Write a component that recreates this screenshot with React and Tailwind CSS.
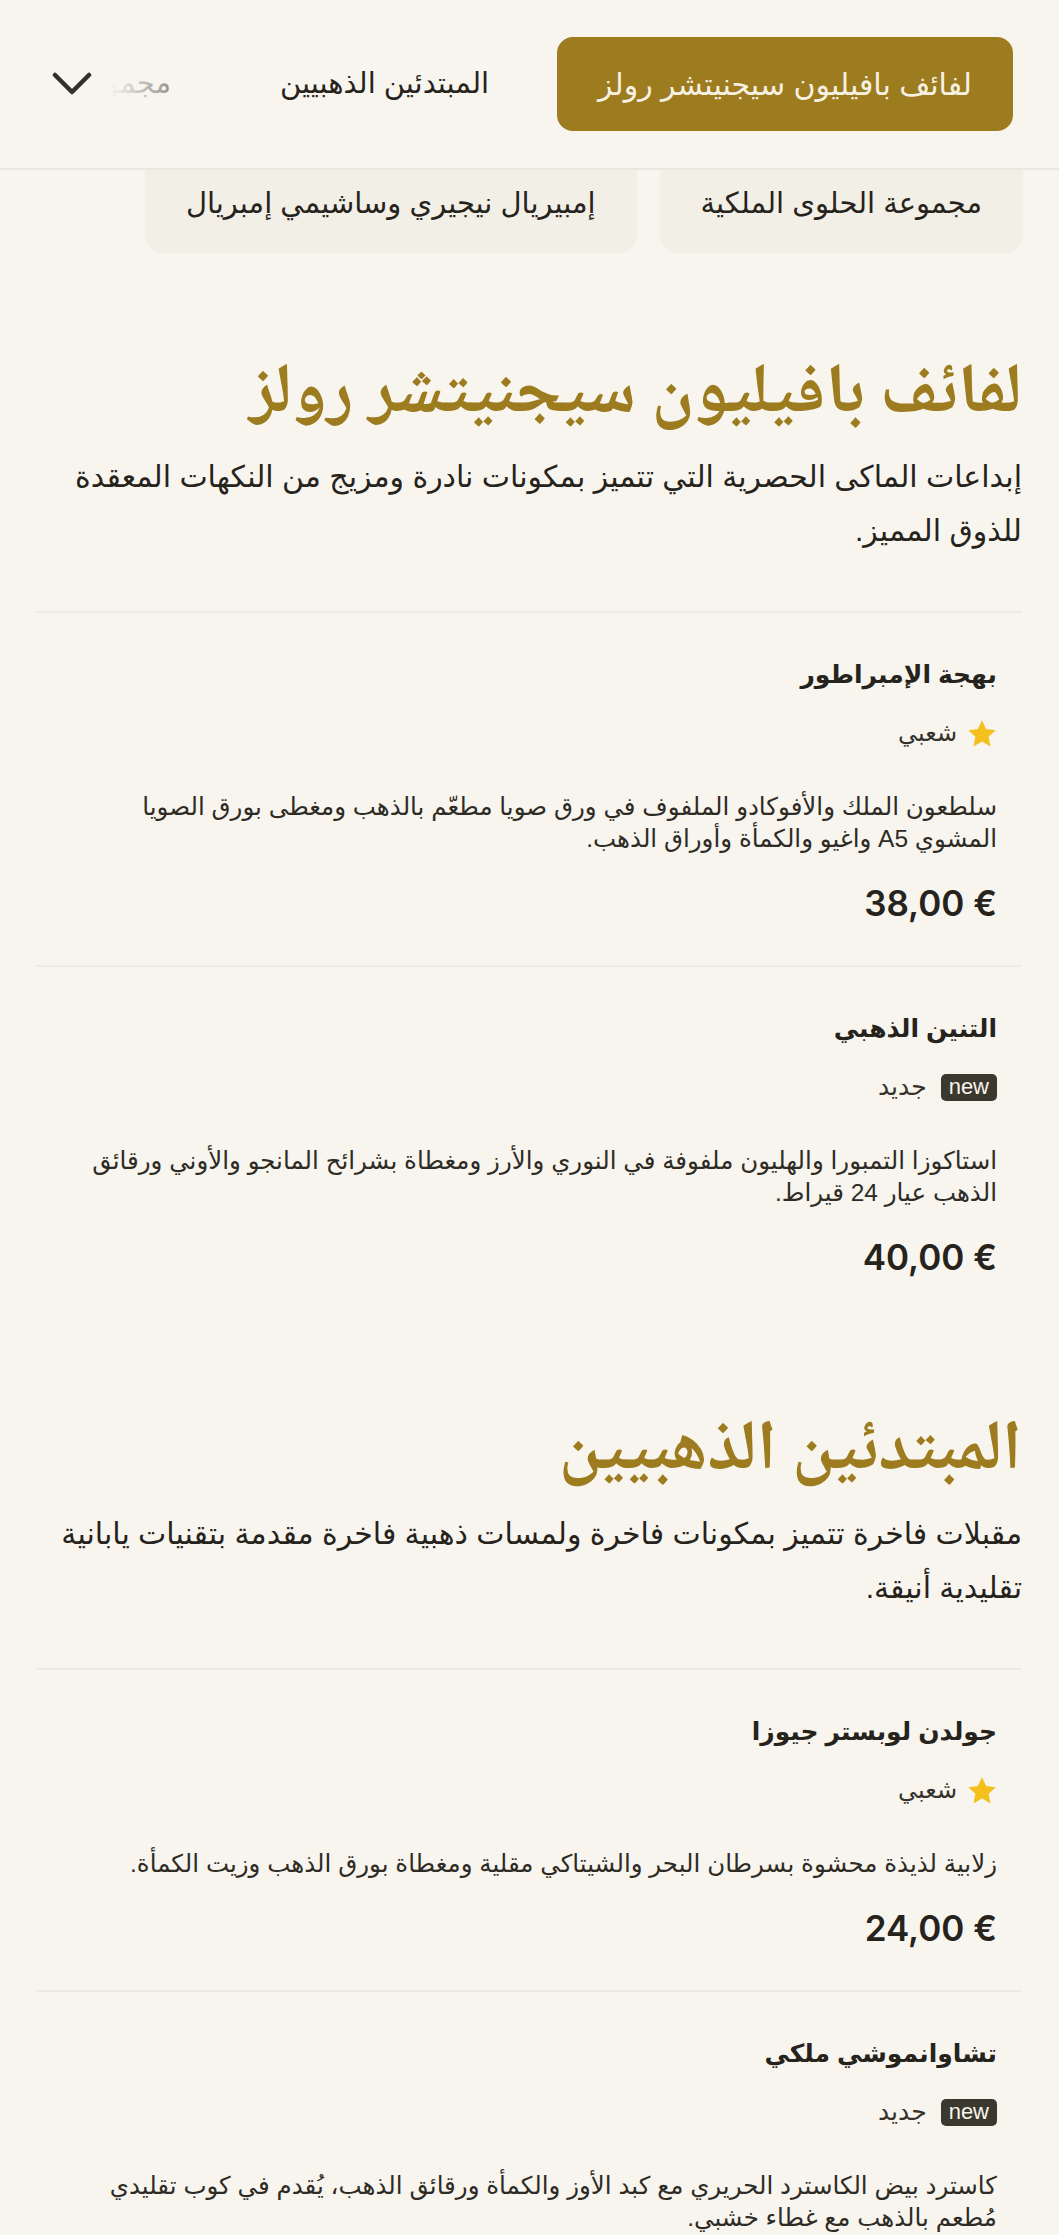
const sections = [
  {
    title: "لفائف بافيليون سيجنيتشر رولز",
    desc: "إبداعات الماكى الحصرية التي تتميز بمكونات نادرة ومزيج من النكهات المعقدة للذوق المميز.",
    items: [
      {
        name: "بهجة الإمبراطور",
        tag: "popular",
        desc: "سلطعون الملك والأفوكادو الملفوف في ورق صويا مطعّم بالذهب ومغطى بورق الصويا المشوي A5 واغيو والكمأة وأوراق الذهب.",
        price: "38,00 €",
      },
      {
        name: "التنين الذهبي",
        tag: "new",
        desc: "استاكوزا التمبورا والهليون ملفوفة في النوري والأرز ومغطاة بشرائح المانجو والأوني ورقائق الذهب عيار 24 قيراط.",
        price: "40,00 €",
      },
    ],
  },
  {
    title: "المبتدئين الذهبيين",
    desc: "مقبلات فاخرة تتميز بمكونات فاخرة ولمسات ذهبية فاخرة مقدمة بتقنيات يابانية تقليدية أنيقة.",
    items: [
      {
        name: "جولدن لوبستر جيوزا",
        tag: "popular",
        desc: "زلابية لذيذة محشوة بسرطان البحر والشيتاكي مقلية ومغطاة بورق الذهب وزيت الكمأة.",
        price: "24,00 €",
      },
      {
        name: "تشاوانموشي ملكي",
        tag: "new",
        desc: "كاسترد بيض الكاسترد الحريري مع كبد الأوز والكمأة ورقائق الذهب، يُقدم في كوب تقليدي مُطعم بالذهب مع غطاء خشبي.",
        price: null,
      },
    ],
  },
];

function Star() {
  return (
    <svg width="30" height="29" viewBox="0 0 24 23" className="shrink-0">
      <path
        d="M12 0.8l3.3 7.1 7.7 0.9-5.7 5.3 1.5 7.7L12 17.9l-6.8 3.9 1.5-7.7L1 8.8l7.7-0.9z"
        fill="#f4c01e"
      />
    </svg>
  );
}

function Tag({ type }) {
  if (type === "new") {
    return (
      <div className="flex h-[30px] items-center gap-[14px]">
        <span
          dir="ltr"
          className="flex h-[27px] items-center rounded-[5px] bg-[#3b382d] px-[8px] text-[22px] leading-none text-[#f8f5ef]"
        >
          new
        </span>
        <span className="text-[25px] text-[#35322b]">جديد</span>
      </div>
    );
  }
  return (
    <div className="flex h-[30px] items-center gap-[10px]">
      <Star />
      <span className="text-[24px] text-[#35322b]">شعبي</span>
    </div>
  );
}

function Item({ item, last }) {
  return (
    <div
      className={
        "px-[25px] pt-[41px] pb-[40px] " +
        (last ? "" : "border-b-2 border-[#efebe3]")
      }
    >
      <h3 className="text-[25px] font-bold leading-[40px] text-[#26231c]">
        {item.name}
      </h3>
      <div className="mt-[24px]">
        <Tag type={item.tag} />
      </div>
      <p className="mt-[43px] text-[24.5px] leading-[32px] text-[#2e2b25]">
        {item.desc}
      </p>
      {item.price && (
        <div
          dir="ltr"
          className="mt-[26px] text-right font-['Inter',sans-serif] text-[35px] font-semibold leading-[44px] text-[#26231c]"
        >
          {item.price}
        </div>
      )}
    </div>
  );
}

function Section({ section }) {
  return (
    <section className="pt-[103px]">
      <div className="border-b-2 border-[#efebe3] pb-[53px]">
        <h2 className="font-['Noto_Naskh_Arabic','Amiri','Liberation_Serif','DejaVu_Sans',serif] text-[70px] font-bold leading-[64px] text-[#9d7b1f]">
          {section.title}
        </h2>
        <p className="mt-[21px] text-[30px] leading-[54px] text-[#26231c]">
          {section.desc}
        </p>
      </div>
      {section.items.map((it, i) => (
        <Item key={i} item={it} last={i === section.items.length - 1} />
      ))}
    </section>
  );
}

export default function App() {
  return (
    <div
      dir="rtl"
      className="min-h-screen bg-[#f8f5ef] font-['Liberation_Sans','DejaVu_Sans',sans-serif] text-[#26231c]"
    >
      <header className="relative z-10 flex h-[170px] items-center border-b-2 border-[#ebe7de] bg-[#f8f5ef] pl-[52px] pr-[46px]">
        <div className="relative min-w-0 flex-1 overflow-hidden">
          <div className="flex items-center gap-[27px] whitespace-nowrap">
            <button className="h-[94px] shrink-0 rounded-[16px] bg-[#9d7b1f] px-[41px] text-[30px] text-[#f7f1e3]">
              لفائف بافيليون سيجنيتشر رولز
            </button>
            <button className="h-[94px] shrink-0 px-[41px] text-[29px] text-[#26231c]">
              المبتدئين الذهبيين
            </button>
            <button className="h-[94px] shrink-0 px-[41px] text-[29px] text-[#26231c]">
              مجموعة الحلوى الملكية
            </button>
          </div>
          <div className="pointer-events-none absolute inset-y-0 left-0 w-[130px] bg-linear-to-r from-[#f8f5ef] to-transparent" />
        </div>
        <button className="mr-[18px] shrink-0">
          <svg width="40" height="24" viewBox="0 0 40 24" fill="none">
            <polyline
              points="3,3 20,20 37,3"
              stroke="#33302a"
              strokeWidth="4.5"
              strokeLinecap="round"
              strokeLinejoin="round"
            />
          </svg>
        </button>
      </header>

      <div className="relative -mt-[13px] flex gap-[25px] pr-[37px]">
        <div className="flex h-[94px] items-center rounded-[16px] bg-[#f2efe6] px-[40px] text-[29px] text-[#26231c] shadow-[0_1px_3px_rgba(0,0,0,0.05)]">
          مجموعة الحلوى الملكية
        </div>
        <div className="flex h-[94px] items-center rounded-[16px] bg-[#f2efe6] px-[40px] text-[29px] text-[#26231c] shadow-[0_1px_3px_rgba(0,0,0,0.05)]">
          إمبيريال نيجيري وساشيمي إمبريال
        </div>
      </div>

      <main className="px-[37px] pt-[11px]">
        {sections.map((s, i) => (
          <Section key={i} section={s} />
        ))}
      </main>
    </div>
  );
}
